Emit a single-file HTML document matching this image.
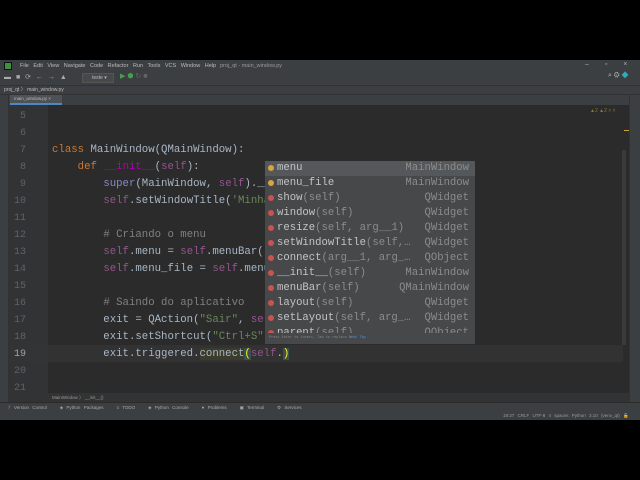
<!DOCTYPE html><html><head><meta charset="utf-8"><style>
*{margin:0;padding:0;box-sizing:border-box}
body{width:640px;height:480px;background:#000;position:relative;overflow:hidden;font-family:"Liberation Sans",sans-serif}
.a{position:absolute}
.ui{color:#bbb;font-size:5px;white-space:nowrap}
.code{font-family:"Liberation Mono",monospace;font-size:10.7px;color:#a9b7c6;white-space:pre;position:absolute;left:52px;line-height:17px}
.ln{font-family:"Liberation Mono",monospace;font-size:10px;color:#606366;position:absolute;left:10px;width:16px;text-align:right;line-height:17px}
.k{color:#cc7832}.s{color:#94558d}.g{color:#6a8759}.c{color:#808080}.m{color:#b200b2}.p{color:#8888c6}
.pop{position:absolute;left:265px;top:161px;width:210px;height:183px;background:#46484a;overflow:hidden;font-family:"Liberation Mono",monospace;font-size:10.6px}
.r{height:15px;line-height:15px;position:relative;padding-left:12px;color:#c4c4c4;white-space:nowrap}
.r i{position:absolute;left:3px;top:4px;width:6px;height:6px;border-radius:50%;background:#c75450}
.r i.f{background:#d9a343}
.r span.t{position:absolute;right:6px;top:0;color:#8c8c8c}
.r b{font-weight:normal;color:#8c8c8c}
</style></head><body>
<div class="a" style="left:0;top:60px;width:640px;height:360px;background:#3c3f41"></div>
<div class="a" style="left:4px;top:62px;width:8px;height:8px;background:#3f8f3f;border:1px solid #111"></div>
<div class="a ui" style="left:20px;top:63px;font-size:5.5px;word-spacing:3px">File Edit View Navigate Code Refactor Run Tools VCS Window Help</div>
<div class="a ui" style="left:220px;top:63px;font-size:5.5px;color:#999">proj_qt - main_window.py</div>
<div class="a ui" style="left:585px;top:61px;font-size:7px;color:#aaa;word-spacing:14px">– ▫ ×</div>
<div class="a ui" style="left:4px;top:73px;font-size:7px;color:#aaa;word-spacing:3px">▬ ■ ⟳ ← → ▲</div>
<div class="a" style="left:82px;top:73px;width:32px;height:10px;border:1px solid #555;background:#45494a"></div>
<div class="a ui" style="left:92px;top:75px">teste ▾</div>
<div class="a ui" style="left:120px;top:72px;font-size:7px;color:#499c54">▶ ⬢ <span style="color:#666">↻ ■</span></div>
<div class="a ui" style="left:608px;top:72px;font-size:7px;color:#bbb">⌕ ⚙ <span style="color:#3ab">◆</span></div>
<div class="a" style="left:0;top:85px;width:640px;height:1px;background:#323232"></div>
<div class="a ui" style="left:4px;top:86px">proj_qt 〉 main_window.py</div>
<div class="a" style="left:0;top:94px;width:640px;height:1px;background:#323232"></div>
<div class="a" style="left:10px;top:95px;width:52px;height:9px;background:#4e5254"></div>
<div class="a" style="left:10px;top:103px;width:52px;height:2px;background:#4a88c7"></div>
<div class="a ui" style="left:14px;top:96px;font-size:4.5px">main_window.py ×</div>
<div class="a" style="left:0;top:95px;width:9px;height:307px;background:#3c3f41;border-right:1px solid #323232"></div>
<div class="a" style="left:629px;top:95px;width:11px;height:307px;background:#3c3f41;border-left:1px solid #323232"></div>
<div class="a" style="left:9px;top:105px;width:620px;height:288px;background:#2b2b2b"></div>
<div class="a" style="left:9px;top:105px;width:39px;height:288px;background:#313335"></div>
<div class="a" style="left:48px;top:345px;width:575px;height:17px;background:#323232"></div>
<div class="a" style="left:9px;top:345px;width:39px;height:17px;background:#333436"></div>
<div class="a" style="left:622px;top:150px;width:4px;height:195px;background:#3a3a3a"></div>
<div class="a" style="left:624px;top:130px;width:5px;height:1px;background:#c9a43c"></div>
<div class="a ui" style="left:590px;top:108px;color:#8a7a3a">▲2 ▲2 ˄ ˅</div>
<div class="ln" style="top:108px">5<br>6<br>7<br>8<br>9<br>10<br>11<br>12<br>13<br>14<br>15<br>16<br>17<br>18<br><span style="color:#a4a3a3">19</span><br>20<br>21</div>
<div class="code" style="top:108px">

<span class="k">class</span> MainWindow(QMainWindow):
    <span class="k">def</span> <span class="m">__init__</span>(<span class="s">self</span>):
        <span class="p">super</span>(MainWindow, <span class="s">self</span>).__
        <span class="s">self</span>.setWindowTitle(<span class="g">'Minha</span>

        <span class="c"># Criando o menu</span>
        <span class="s">self</span>.menu = <span class="s">self</span>.menuBar()
        <span class="s">self</span>.menu_file = <span class="s">self</span>.menu

        <span class="c"># Saindo do aplicativo</span>
        exit = QAction(<span class="g">"Sair"</span>, <span class="s">sel</span>
        exit.setShortcut(<span class="g">"Ctrl+S"</span>)
        exit.triggered.<span style="background:#3b3c2c">connect</span><span style="background:#3b514d;color:#ffef28">(</span><span class="s">self</span>.<span style="background:#3b514d;color:#ffef28">)</span>
</div>
<div class="pop">
<div class="r" style="background:#55585b"><i class="f"></i>menu<span class="t">MainWindow</span></div>
<div class="r"><i class="f"></i>menu_file<span class="t">MainWindow</span></div>
<div class="r"><i></i>show<b>(self)</b><span class="t">QWidget</span></div>
<div class="r"><i></i>window<b>(self)</b><span class="t">QWidget</span></div>
<div class="r"><i></i>resize<b>(self, arg__1)</b><span class="t">QWidget</span></div>
<div class="r"><i></i>setWindowTitle<b>(self,…</b><span class="t">QWidget</span></div>
<div class="r"><i></i>connect<b>(arg__1, arg_…</b><span class="t">QObject</span></div>
<div class="r"><i></i>__init__<b>(self)</b><span class="t">MainWindow</span></div>
<div class="r"><i></i>menuBar<b>(self)</b><span class="t">QMainWindow</span></div>
<div class="r"><i></i>layout<b>(self)</b><span class="t">QWidget</span></div>
<div class="r"><i></i>setLayout<b>(self, arg_…</b><span class="t">QWidget</span></div>
<div class="r" style="height:7px;overflow:hidden"><i></i>parent<b>(self)</b><span class="t">QObject</span></div>
<div class="a ui" style="left:4px;top:175px;font-size:3.5px;color:#888">Press Enter to insert, Tab to replace <span style="color:#589df6">Next Tip</span></div>
</div>
<div class="a" style="left:9px;top:393px;width:620px;height:9px;background:#313335"></div>
<div class="a ui" style="left:52px;top:395px;font-size:4.5px;color:#999">MainWindow 〉 __init__()</div>
<div class="a" style="left:0;top:402px;width:640px;height:1px;background:#2b2b2b"></div>
<div class="a ui" style="left:8px;top:405px;font-size:4.5px;color:#aaa;word-spacing:2px">ᚠ Version Control &nbsp;&nbsp; ◈ Python Packages &nbsp;&nbsp; ≡ TODO &nbsp;&nbsp; ◈ Python Console &nbsp;&nbsp; ● Problems &nbsp;&nbsp; ▣ Terminal &nbsp;&nbsp; ⚙ Services</div>
<div class="a ui" style="left:503px;top:413px;font-size:4.5px;color:#999;word-spacing:2px">19:37 CRLF UTF-8 4 spaces Python 3.10 (venv_qt) 🔓</div>
</body></html>
